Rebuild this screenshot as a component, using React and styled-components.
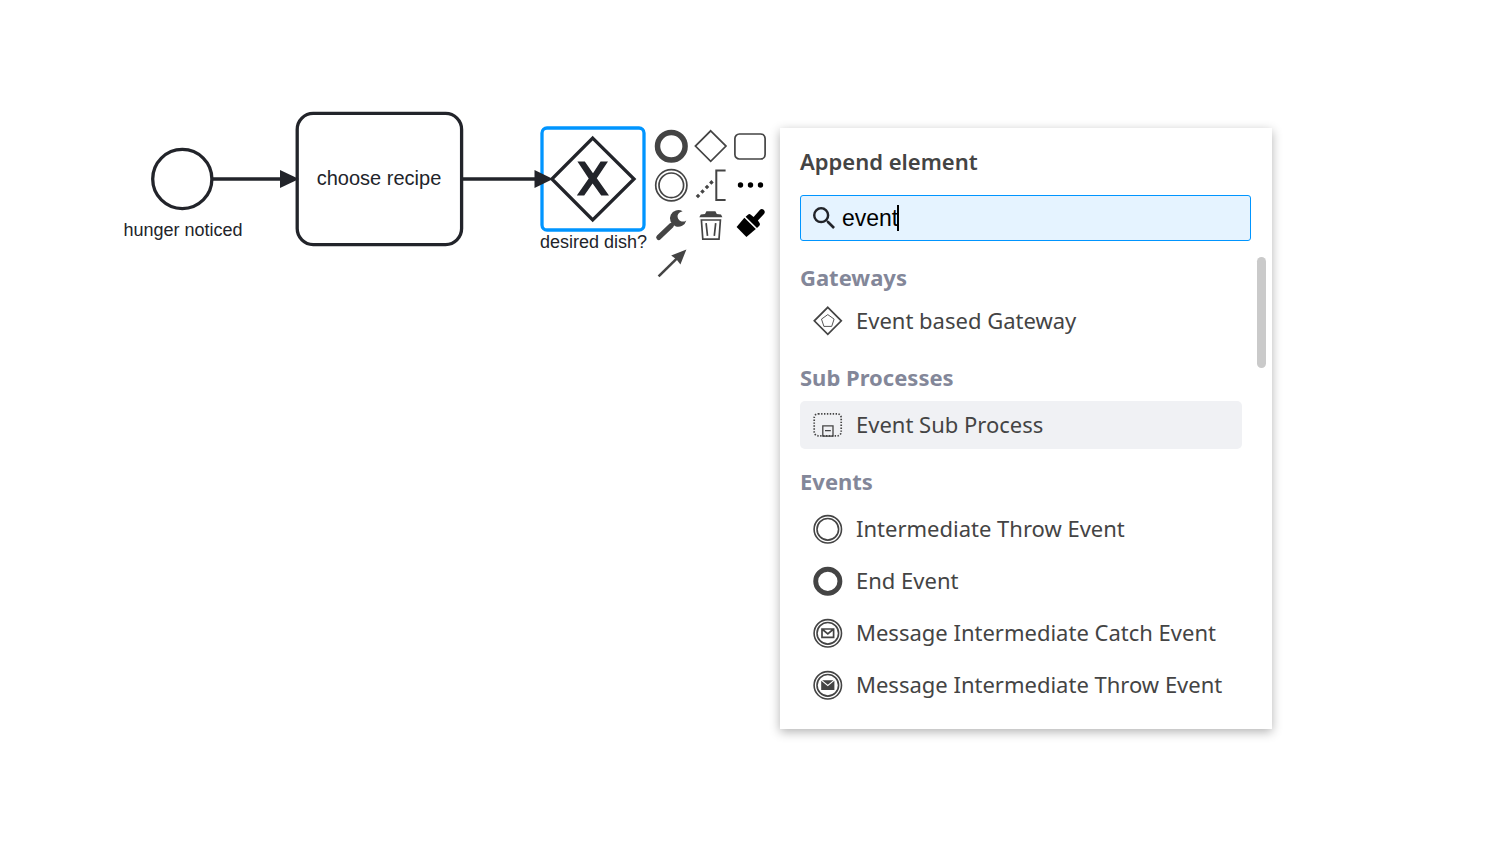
import React, { useState } from "react";
import styled, { createGlobalStyle } from "styled-components";

const INK = "#22242a";
const ICON = "#444444";
const BLUE = "#0095ff";

const GlobalStyle = createGlobalStyle`
  * { box-sizing: border-box; }
  body { margin: 0; background: #ffffff; font-family: "Liberation Sans", Arial, sans-serif; }
`;

/* ---------- canvas ---------- */

const Canvas = styled.main`
  position: relative;
  min-height: 100vh;
  overflow: hidden;
  background: #ffffff;
`;

const Diagram = styled.svg`
  position: absolute;
  left: 0;
  top: 0;
  overflow: visible;
  fill: none;
  stroke: ${INK};
  stroke-width: 3.3;

  text {
    font-family: "Liberation Sans", Arial, sans-serif;
    font-size: 18px;
    text-anchor: middle;
    fill: ${INK};
    stroke: none;
  }

  .task-name { font-size: 20px; }
  .solid { fill: ${INK}; stroke: none; }
  .outline { stroke: ${BLUE}; }
`;

/* ---------- context pad ---------- */

const ContextPad = styled.div`
  position: absolute;
  left: 653px;
  top: 128px;
  display: grid;
  grid-template-columns: repeat(3, 36px);
  gap: 3px 4px;
`;

const PadButton = styled.button`
  width: 36px;
  height: 36px;
  padding: 0;
  border: 0;
  background: none;
  color: ${(p) => (p.$dark ? "#000000" : ICON)};
  cursor: pointer;
`;

const Icon = styled.svg`
  display: block;
  flex: none;
  width: ${(p) => p.$size}px;
  height: ${(p) => p.$size}px;
  fill: none;
  stroke: currentColor;
  stroke-width: 1.7;

  .solid { fill: currentColor; stroke: none; }
`;

const padEntries = [
  { title: "Append end event", icon: <circle cx="18.3" cy="18.3" r="13.8" strokeWidth="5.5" /> },
  { title: "Append gateway", icon: <path d="M17.7 2.8 33 18.1 17.7 33.4 2.4 18.1Z" /> },
  { title: "Append task", icon: <rect x="1.9" y="6" width="30.2" height="25" rx="4.5" /> },
  {
    title: "Append intermediate event",
    icon: (
      <>
        <circle cx="18.3" cy="18.3" r="15.6" />
        <circle cx="18.3" cy="18.3" r="12.3" />
      </>
    ),
  },
  {
    title: "Add text annotation",
    icon: (
      <>
        <path d="M32.6 3.5H23.3V32.9H32.6" strokeWidth="2" />
        <path
          className="solid"
          d="M5 26.7 7.3 29 5 31.3 2.7 29ZM9.5 22.2 11.8 24.5 9.5 26.8 7.2 24.5ZM14 17.7 16.3 20 14 22.3 11.7 20ZM18.4 13.1 20.7 15.4 18.4 17.7 16.1 15.4Z"
        />
      </>
    ),
  },
  {
    title: "Append element",
    dark: true,
    icon: (
      <g className="solid">
        <circle cx="7.5" cy="18" r="2.7" />
        <circle cx="17.5" cy="18" r="2.7" />
        <circle cx="27.5" cy="18" r="2.7" />
      </g>
    ),
  },
  {
    title: "Change element",
    icon: (
      <>
        <path
          className="solid"
          d="M29.6 5.3A8.3 8.3 0 1 0 33.3 14.4C31.2 16 28.2 16 26.3 14.2C24.4 12.4 24 9.8 25.2 8C26.2 6.6 27.8 6 29.6 5.3Z"
        />
        <path d="M5.8 31.4 18.4 19.4" strokeWidth="5.2" strokeLinecap="round" />
      </>
    ),
  },
  {
    title: "Delete",
    icon: (
      <>
        <path className="solid" d="M6.3 11.2 7.8 8.6 12 8 13.4 5.2H22.4L23.8 8 28 8.6 29.4 11.2Z" />
        <path d="M8.4 14H27.4L26 33.2H9.8Z" />
        <path d="M13.1 17.2 14.5 29.8M22.7 17.2 21.3 29.8" />
      </>
    ),
  },
  {
    title: "Set color",
    dark: true,
    icon: (
      <>
        <path
          className="solid"
          d="M12.6 10.8 15.2 8.5Q16.5 7.6 17.8 8.7L20.6 11 26.8 3.9Q28.7 2 30.9 4Q32.6 6 31 8L24.9 14.4 26.6 17Q27.4 18.6 26.3 19.8L24 22Z"
        />
        <path className="solid" d="M11.4 11.8 22.8 22.9 13.4 30.9 3.6 21Z" />
      </>
    ),
  },
  {
    title: "Connect",
    icon: (
      <>
        <path d="M5.6 31.4 26 11.4" strokeWidth="2.6" />
        <path className="solid" d="M33.4 4.5 27.4 19.4 23.6 14.4 18.2 10.4Z" />
      </>
    ),
  },
];

/* ---------- append menu ---------- */

const Popup = styled.section`
  position: absolute;
  left: 780px;
  top: 128px;
  width: 492px;
  padding: 19px 0 20px;
  background: #ffffff;
  box-shadow: 0 3px 10px rgba(0, 0, 0, 0.3);
  font-family: "Noto Sans", "Open Sans", sans-serif;
  font-size: 22px;
  line-height: 28px;
  color: ${ICON};
`;

const Title = styled.h2`
  margin: 0 20px 20px;
  font-size: inherit;
  font-weight: 600;
`;

const SearchBox = styled.label`
  display: flex;
  align-items: center;
  gap: 7px;
  height: 46px;
  margin: 0 21px 0 20px;
  padding: 0 12px;
  border: 1px solid ${BLUE};
  border-radius: 3px;
  background: #e5f3ff;
  color: ${INK};
`;

const SearchInput = styled.input`
  field-sizing: content;
  min-width: 0;
  padding: 0;
  border: 0;
  outline: 0;
  background: none;
  font-family: "Liberation Sans", Arial, sans-serif;
  font-size: 23px;
  line-height: 28px;
  color: #000000;
  caret-color: transparent;
`;

const Caret = styled.span`
  width: 2px;
  height: 26px;
  margin-left: -8px;
  background: #000000;
`;

const Results = styled.div`
  display: flex;
  justify-content: space-between;
  padding: 16px 6px 0 20px;
`;

const Groups = styled.div`
  flex: 1;
  margin-right: 15px;
  padding-top: 6px;
  display: flex;
  flex-direction: column;
  gap: 18px;
`;

const Group = styled.section`
  display: flex;
  flex-direction: column;
  gap: ${(p) => (p.$tight ? 6 : 10)}px;
`;

const GroupName = styled.h3`
  margin: 0;
  font-size: inherit;
  font-weight: 700;
  color: #838799;
`;

const Entries = styled.ul`
  display: flex;
  flex-direction: column;
  gap: 4px;
  margin: 0;
  padding: 0;
  list-style: none;
`;

const Entry = styled.button`
  display: flex;
  align-items: center;
  gap: 13px;
  width: 100%;
  height: 48px;
  padding: 0 0 0 13px;
  border: 0;
  border-radius: 5px;
  background: ${(p) => (p.$selected ? "#f0f1f4" : "transparent")};
  color: inherit;
  font: inherit;
  white-space: nowrap;
  cursor: pointer;
`;

const EntryLabel = styled.span`
  padding-bottom: 2px;
`;

const ScrollThumb = styled.div`
  width: 9px;
  height: 111px;
  border-radius: 5px;
  background: #cacaca;
`;

const doubleRing = (
  <>
    <circle cx="14.8" cy="15.3" r="13.7" strokeWidth="1.6" />
    <circle cx="14.8" cy="15.3" r="10.8" strokeWidth="1.6" />
  </>
);

const groups = [
  {
    name: "Gateways",
    tight: true,
    entries: [
      {
        label: "Event based Gateway",
        icon: (
          <>
            <path d="M14.8 1.3 28.3 14.8 14.8 28.3 1.3 14.8Z" />
            <path d="M14.8 8.6 21.1 13.1 18.7 20.4H10.9L8.5 13.1Z" strokeWidth="0.9" />
          </>
        ),
      },
    ],
  },
  {
    name: "Sub Processes",
    entries: [
      {
        label: "Event Sub Process",
        selected: true,
        icon: (
          <>
            <rect x="1.2" y="3.8" width="27" height="22" rx="4" strokeDasharray="1.4 1.5" />
            <path d="M9.8 26.2V15.8H20V26.2ZM12 20.6H17.8" strokeWidth="1.3" />
          </>
        ),
      },
    ],
  },
  {
    name: "Events",
    entries: [
      { label: "Intermediate Throw Event", icon: doubleRing },
      { label: "End Event", icon: <circle cx="14.8" cy="15.3" r="12.1" strokeWidth="4.9" /> },
      {
        label: "Message Intermediate Catch Event",
        icon: (
          <>
            {doubleRing}
            <path d="M9 11H20.6V19.4H9ZM9 11 14.8 16 20.6 11" />
          </>
        ),
      },
      {
        label: "Message Intermediate Throw Event",
        icon: (
          <>
            {doubleRing}
            <path className="solid" d="M9.2 10.2H20.4L14.8 14.8ZM8.2 10.8 14.8 16.3 21.4 10.8V20.1H8.2Z" />
          </>
        ),
      },
    ],
  },
];

function ProcessDiagram() {
  return (
    <Diagram width="780" height="300" role="img" aria-label="Process diagram">
      <circle cx="182.3" cy="179" r="29.6" />
      <text x="183" y="236">hunger noticed</text>

      <path d="M213 179H282" />
      <path className="solid" d="M280 170V188L299 179Z" />

      <rect x="297.2" y="113.4" width="164.4" height="131.2" rx="16" />
      <text className="task-name" x="379" y="185">choose recipe</text>

      <rect className="outline" x="542" y="128" width="102" height="102" rx="5" />
      <path d="M592.7 138.2 634 179 592.7 219.8 551.9 179Z" />
      <path
        className="solid"
        d="M577.4 161.6H584.8L593 173.2 600.6 161.6H608L596.8 178.3 609 195.4H601.2L592.6 183.6 584.2 195.4H576.8L588.7 178.4Z"
      />
      <path d="M462 179H537" />
      <path className="solid" d="M534.5 170V188L553 179Z" />
      <text x="593.5" y="248">desired dish?</text>
    </Diagram>
  );
}

export default function App() {
  const [query, setQuery] = useState("event");

  return (
    <>
      <GlobalStyle />
      <Canvas>
        <ProcessDiagram />

        <ContextPad>
          {padEntries.map(({ title, dark, icon }) => (
            <PadButton key={title} $dark={dark} aria-label={title}>
              <Icon $size={36} viewBox="0 0 36 36">{icon}</Icon>
            </PadButton>
          ))}
        </ContextPad>

        <Popup>
          <Title>Append element</Title>
          <SearchBox>
            <Icon $size={22} viewBox="3 3 17.5 17.5">
              <path
                className="solid"
                d="M15.5 14h-.79l-.28-.27A6.47 6.47 0 0 0 16 9.5 6.5 6.5 0 1 0 9.5 16c1.61 0 3.09-.59 4.23-1.57l.27.28v.79l5 4.99L20.49 19l-4.99-5zm-6 0C7.01 14 5 11.99 5 9.5S7.01 5 9.5 5 14 7.01 14 9.5 11.99 14 9.5 14z"
              />
            </Icon>
            <SearchInput
              type="text"
              aria-label="Search elements"
              value={query}
              onChange={(e) => setQuery(e.target.value)}
            />
            <Caret />
          </SearchBox>
          <Results>
            <Groups>
              {groups.map((group) => (
                <Group key={group.name} $tight={group.tight}>
                  <GroupName>{group.name}</GroupName>
                  <Entries>
                    {group.entries.map(({ label, selected, icon }) => (
                      <li key={label}>
                        <Entry $selected={selected}>
                          <Icon $size={30} viewBox="0 0 30 30">{icon}</Icon>
                          <EntryLabel>{label}</EntryLabel>
                        </Entry>
                      </li>
                    ))}
                  </Entries>
                </Group>
              ))}
            </Groups>
            <ScrollThumb />
          </Results>
        </Popup>
      </Canvas>
    </>
  );
}
